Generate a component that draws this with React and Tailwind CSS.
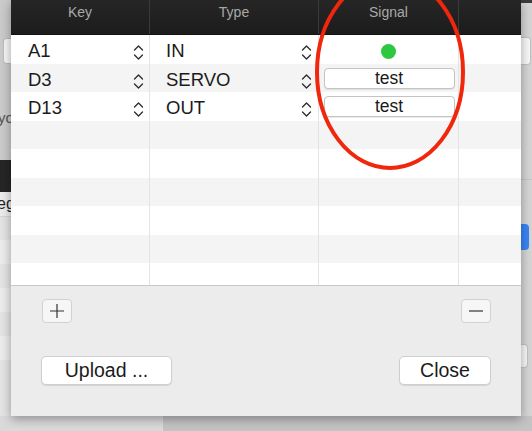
import React from "react"

const rows = [
  { key: "A1", type: "IN", signal: "dot" },
  { key: "D3", type: "SERVO", signal: "button" },
  { key: "D13", type: "OUT", signal: "button" },
  {}, {}, {}, {}, {}, {}, {},
]

const Stepper = () => (
  <svg width="11" height="17" viewBox="0 0 11 17" fill="none" stroke="#2a2a2a" strokeWidth="1.3" strokeLinecap="round" strokeLinejoin="round">
    <path d="M1.5 6L5.5 2L9.5 6" />
    <path d="M1.5 11L5.5 15L9.5 11" />
  </svg>
)

const Cell = ({ w, children, className = "" }) => (
  <div className={`${w} shrink-0 h-full border-r border-[#e4e4e4] flex items-center ${className}`}>
    {children}
  </div>
)

export default function App() {
  return (
    <div className="w-[532px] h-[431px] overflow-hidden bg-[#d2d2d2] flex flex-col" style={{ fontFamily: '"Liberation Sans", Arial, sans-serif' }}>
      <div className="flex h-[416px] shrink-0">
        {/* background window, left */}
        <div className="w-[11px] shrink-0 flex flex-col bg-[#cbcbcb] overflow-hidden">
          <div className="h-[38px] shrink-0" />
          <div className="h-[26px] shrink-0 ml-[3px] bg-[#f7f7f7] border border-[#bdbdbd] rounded-l-[4px] border-r-0" />
          <div className="h-[46px] shrink-0" />
          <div className="h-[16px] shrink-0 text-[15px] leading-[16px] text-[#555] whitespace-nowrap -ml-[2px]">yo</div>
          <div className="h-[34px] shrink-0" />
          <div className="h-[32px] shrink-0 bg-[#262626]" />
          <div className="h-[24px] shrink-0 bg-[#ececec] text-[16px] leading-[24px] text-[#222] whitespace-nowrap -ml-[3px]">eg</div>
          <div className="h-[24px] shrink-0 bg-[#e4e4e4] border-t border-[#d6d6d6]" />
          <div className="h-[24px] shrink-0 bg-[#ececec]" />
          <div className="h-[24px] shrink-0 bg-[#e4e4e4]" />
          <div className="h-[24px] shrink-0 bg-[#ececec]" />
          <div className="h-[24px] shrink-0 bg-[#e4e4e4]" />
          <div className="h-[24px] shrink-0 bg-[#ececec]" />
          <div className="flex-1 bg-[#e4e4e4]" />
        </div>

        {/* sheet */}
        <div className="w-[510px] shrink-0 relative flex flex-col bg-[#ececec] shadow-[0_3px_10px_rgba(0,0,0,0.35)] z-10">
          {/* header */}
          <div className="h-[35px] shrink-0 flex bg-gradient-to-b from-[#262626] to-[#1c1c1c] border-b border-[#141414] text-[14px] leading-[16px] text-[#a9a9a9]">
            <div className="w-[139px] shrink-0 border-r border-[#3a3a3a] flex justify-center pt-[4px]">Key</div>
            <div className="w-[169px] shrink-0 border-r border-[#3a3a3a] flex justify-center pt-[4px]">Type</div>
            <div className="w-[140px] shrink-0 border-r border-[#3a3a3a] flex justify-center pt-[4px]">Signal</div>
            <div className="flex-1" />
          </div>

          {/* body */}
          <div className="h-[250px] shrink-0 overflow-hidden bg-white">
            {rows.map((r, i) => (
              <div key={i} className={`h-[28.5px] flex ${i % 2 ? "bg-[#f4f4f4]" : "bg-white"} text-[18.5px] text-[#1b1b1b]`}>
                <Cell w="w-[139px]" className="pl-[17px] pr-[5px] justify-between">
                  {r.key && <><span className="pt-[4px]">{r.key}</span><span className="pt-[7px]"><Stepper /></span></>}
                </Cell>
                <Cell w="w-[169px]" className="pl-[16px] pr-[6px] justify-between">
                  {r.type && <><span className="pt-[4px]">{r.type}</span><span className="pt-[7px]"><Stepper /></span></>}
                </Cell>
                <Cell w="w-[140px]" className="justify-center">
                  {r.signal === "dot" && <div className="w-[15px] h-[15px] mt-[4px] rounded-full bg-[#2bc840]" />}
                  {r.signal === "button" && (
                    <div className="w-[131px] h-[21px] ml-[1px] mt-[1px] bg-white border border-[#c4c4c4] rounded-[4px] shadow-[0_1px_0_rgba(0,0,0,0.08)] flex items-center justify-center text-[17.5px] leading-none">
                      test
                    </div>
                  )}
                </Cell>
                <div className="flex-1" />
              </div>
            ))}
          </div>

          {/* footer */}
          <div className="flex-1 border-t border-[#c9c9c9] flex flex-col px-[30px] pt-[13px]">
            <div className="flex justify-between">
              <button type="button" className="w-[30px] h-[24px] ml-[1px] bg-[#f6f6f6] border border-[#d2d2d2] rounded-[4px] flex items-center justify-center">
                <svg width="16" height="16" viewBox="0 0 16 16" stroke="#333" strokeWidth="1.2"><path d="M8 1v14M1 8h14" /></svg>
              </button>
              <button type="button" className="w-[30px] h-[24px] bg-[#f6f6f6] border border-[#d2d2d2] rounded-[4px] flex items-center justify-center">
                <svg width="16" height="16" viewBox="0 0 16 16" stroke="#333" strokeWidth="1.2"><path d="M1 8h14" /></svg>
              </button>
            </div>
            <div className="flex justify-between mt-[33px]">
              <button type="button" className="w-[131px] h-[29px] bg-white border border-[#cfcfcf] rounded-[5px] shadow-[0_1px_1px_rgba(0,0,0,0.1)] text-[19.5px] text-[#1b1b1b] flex items-center justify-center">
                Upload ...
              </button>
              <button type="button" className="w-[92px] h-[29px] bg-white border border-[#cfcfcf] rounded-[5px] shadow-[0_1px_1px_rgba(0,0,0,0.1)] text-[19.5px] text-[#1b1b1b] flex items-center justify-center">
                Close
              </button>
            </div>
          </div>

          {/* annotation */}
          <svg className="absolute left-0 top-0 pointer-events-none" width="510" height="200" viewBox="0 0 510 200">
            <ellipse cx="379" cy="72" rx="73" ry="96" fill="none" stroke="#f0260d" strokeWidth="4" />
          </svg>
        </div>

        {/* background window, right */}
        <div className="w-[11px] shrink-0 flex flex-col bg-[#d5d5d5] overflow-hidden">
          <div className="h-[3px] shrink-0 bg-[#3a3a3a]" />
          <div className="h-[34px] shrink-0" />
          <div className="h-[28px] shrink-0 w-[10px] bg-[#f8f8f8] border border-[#c2c2c2] border-l-0 rounded-r-[4px]" />
          <div className="h-[115px] shrink-0 border-b border-[#c6c6c6]" />
          <div className="h-[44px] shrink-0" />
          <div className="h-[26px] shrink-0 w-[8px] bg-[#3b84f5] rounded-r-[4px]" />
          <div className="h-[94px] shrink-0" />
          <div className="h-[24px] shrink-0 w-[7px] bg-[#f8f8f8] border border-[#c2c2c2] border-l-0 rounded-r-[4px]" />
          <div className="flex-1" />
        </div>
      </div>
      <div className="flex-1 flex">
        <div className="w-[163px] bg-[#dadada]" />
        <div className="flex-1 bg-[#c4c4c4]" />
      </div>
    </div>
  )
}
